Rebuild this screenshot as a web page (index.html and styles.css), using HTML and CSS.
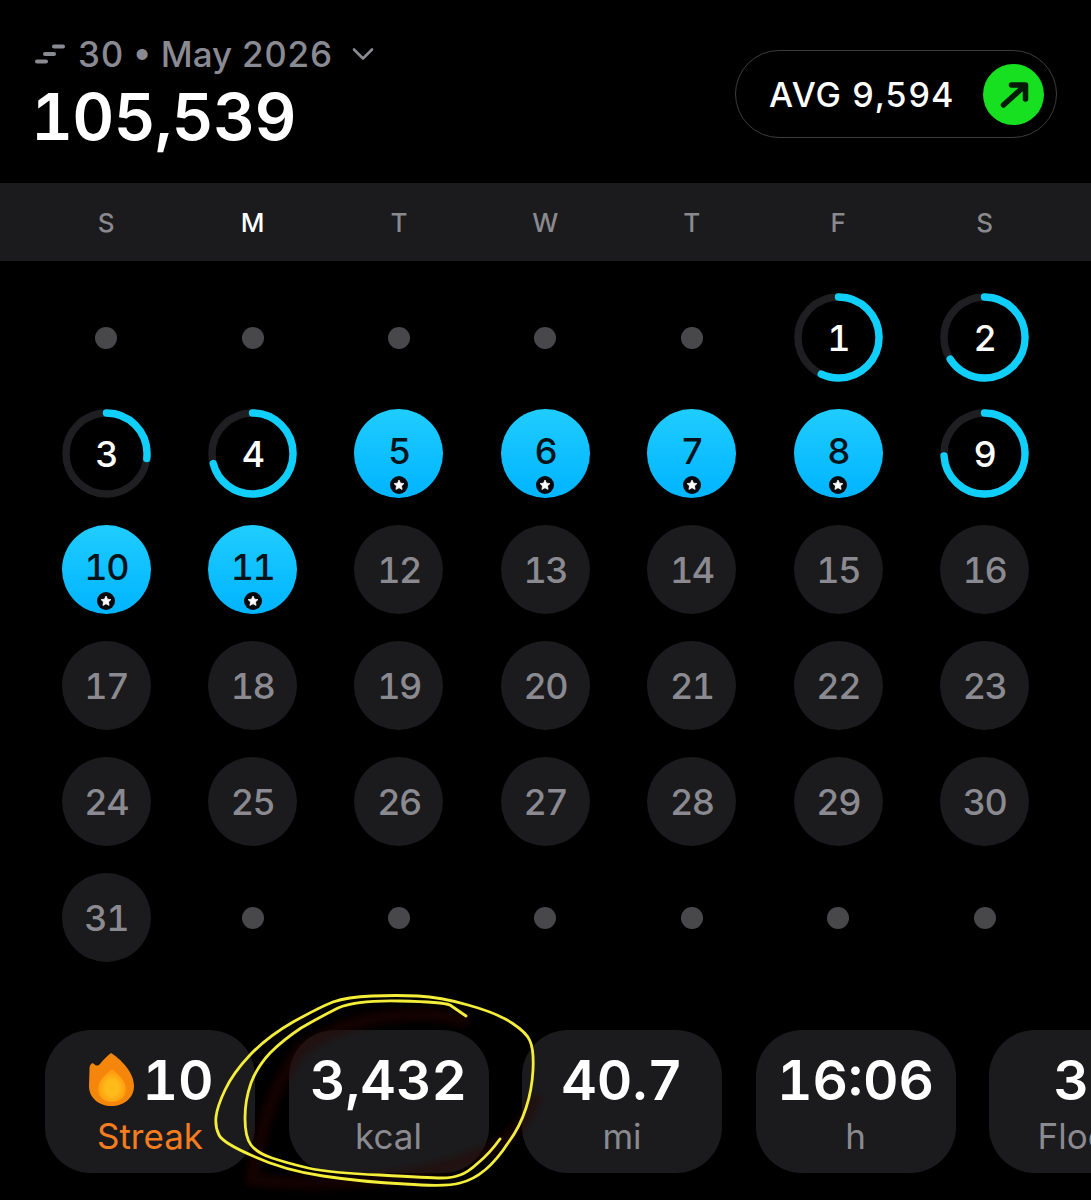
FILE: index.html
```html
<!DOCTYPE html>
<html>
<head>
    <title>Steps Calendar</title>
    <meta name="viewport" content="width=device-width, initial-scale=1">
    <link rel="stylesheet" href="styles.css">
</head>
<body>
    <svg class="defs" width="0" height="0">
        <symbol id="star" viewBox="0 0 24 24">
            <path d="M12 2l3 6.300 6.900.9-5 4.800 1.300 6.900-6.200-3.400-6.200 3.400 1.300-6.900-5-4.800 6.900-.9z" fill="#fff" stroke="#fff" stroke-width="1.500" stroke-linejoin="round"/>
        </symbol>
        <radialGradient id="flame-core" cx="0.5" cy="0.58" r="0.5">
            <stop offset="0.45" stop-color="#ffbb1a"/>
            <stop offset="1" stop-color="#ff9a0e"/>
        </radialGradient>
    </svg>

    <div class="page">
        <header class="top">
            <div>
                <div class="period">
                    <svg class="period-icon" width="32" height="22" viewBox="0 0 32 22">
                        <path d="M3 18.500h9M11 11h9M20 3.500h9" stroke="#8a8a92" stroke-width="4" stroke-linecap="round" fill="none"/>
                    </svg>
                    <span>30 • May 2026</span>
                    <svg class="chevron" width="24" height="14" viewBox="0 0 24 14">
                        <path d="M3 2.500l9 9 9-9" stroke="#8a8a92" stroke-width="2.600" stroke-linecap="round" stroke-linejoin="round" fill="none"/>
                    </svg>
                </div>
                <div class="total">105,539</div>
            </div>
            <div class="avg">
                <span>AVG 9,594</span>
                <div class="avg-arrow">
                    <svg width="36" height="36" viewBox="0 0 36 36">
                        <path d="M7.500 29L29 9.500M15.500 9H29.500V23" stroke="#061a08" stroke-width="5.500" stroke-linecap="round" stroke-linejoin="round" fill="none"/>
                    </svg>
                </div>
            </div>
        </header>

        <div class="weekdays">
            <span>S</span>
            <span class="today">M</span>
            <span>T</span>
            <span>W</span>
            <span>T</span>
            <span>F</span>
            <span>S</span>
        </div>

        <div class="month">
            <div class="cell"><i class="dot"></i></div>
            <div class="cell"><i class="dot"></i></div>
            <div class="cell"><i class="dot"></i></div>
            <div class="cell"><i class="dot"></i></div>
            <div class="cell"><i class="dot"></i></div>
            <div class="cell"><div class="day ring"><svg viewBox="0 0 90 90"><circle class="track" cx="45" cy="45" r="41"/><circle class="progress" cx="45" cy="45" r="41" pathLength="100" stroke-dasharray="57 100"/></svg>1</div></div>
            <div class="cell"><div class="day ring"><svg viewBox="0 0 90 90"><circle class="track" cx="45" cy="45" r="41"/><circle class="progress" cx="45" cy="45" r="41" pathLength="100" stroke-dasharray="66 100"/></svg>2</div></div>

            <div class="cell"><div class="day ring"><svg viewBox="0 0 90 90"><circle class="track" cx="45" cy="45" r="41"/><circle class="progress" cx="45" cy="45" r="41" pathLength="100" stroke-dasharray="27 100"/></svg>3</div></div>
            <div class="cell"><div class="day ring"><svg viewBox="0 0 90 90"><circle class="track" cx="45" cy="45" r="41"/><circle class="progress" cx="45" cy="45" r="41" pathLength="100" stroke-dasharray="71 100"/></svg>4</div></div>
            <div class="cell"><div class="day done">5<svg class="badge"><use href="#star"/></svg></div></div>
            <div class="cell"><div class="day done">6<svg class="badge"><use href="#star"/></svg></div></div>
            <div class="cell"><div class="day done">7<svg class="badge"><use href="#star"/></svg></div></div>
            <div class="cell"><div class="day done">8<svg class="badge"><use href="#star"/></svg></div></div>
            <div class="cell"><div class="day ring"><svg viewBox="0 0 90 90"><circle class="track" cx="45" cy="45" r="41"/><circle class="progress" cx="45" cy="45" r="41" pathLength="100" stroke-dasharray="74 100"/></svg>9</div></div>

            <div class="cell"><div class="day done">10<svg class="badge"><use href="#star"/></svg></div></div>
            <div class="cell"><div class="day done">11<svg class="badge"><use href="#star"/></svg></div></div>
            <div class="cell"><div class="day">12</div></div>
            <div class="cell"><div class="day">13</div></div>
            <div class="cell"><div class="day">14</div></div>
            <div class="cell"><div class="day">15</div></div>
            <div class="cell"><div class="day">16</div></div>

            <div class="cell"><div class="day">17</div></div>
            <div class="cell"><div class="day">18</div></div>
            <div class="cell"><div class="day">19</div></div>
            <div class="cell"><div class="day">20</div></div>
            <div class="cell"><div class="day">21</div></div>
            <div class="cell"><div class="day">22</div></div>
            <div class="cell"><div class="day">23</div></div>

            <div class="cell"><div class="day">24</div></div>
            <div class="cell"><div class="day">25</div></div>
            <div class="cell"><div class="day">26</div></div>
            <div class="cell"><div class="day">27</div></div>
            <div class="cell"><div class="day">28</div></div>
            <div class="cell"><div class="day">29</div></div>
            <div class="cell"><div class="day">30</div></div>

            <div class="cell"><div class="day">31</div></div>
            <div class="cell"><i class="dot"></i></div>
            <div class="cell"><i class="dot"></i></div>
            <div class="cell"><i class="dot"></i></div>
            <div class="cell"><i class="dot"></i></div>
            <div class="cell"><i class="dot"></i></div>
            <div class="cell"><i class="dot"></i></div>
        </div>

        <div class="stats">
            <div class="stat streak">
                <div class="value">
                    <svg class="flame" width="46" height="54" viewBox="0 0 46 54">
                        <path d="M22 0C30 5 45 18 45 33C45 45 35 53 22.500 53C10 53 0 45 0 33L.5 16C.5 12 3 9 5 11C7 13 9 13 11 11C14 7 18 3 22 0z" fill="#f5860c"/>
                        <path d="M23 16C30 22 37 28 37 36C37 44 31 49 23 49C15 49 9 44 9 36C9 28 16 22 23 16z" fill="url(#flame-core)"/>
                    </svg>
                    <span>10</span>
                </div>
                <div class="label">Streak</div>
            </div>
            <div class="stat">
                <div class="value">3,432</div>
                <div class="label">kcal</div>
            </div>
            <div class="stat">
                <div class="value">40.7</div>
                <div class="label">mi</div>
            </div>
            <div class="stat">
                <div class="value">16:06</div>
                <div class="label">h</div>
            </div>
            <div class="stat">
                <div class="value">36</div>
                <div class="label">Floors</div>
            </div>
        </div>

        <!-- marker scribble drawn on top of the screenshot -->
        <svg class="scribble" width="1091" height="1200" viewBox="0 0 1091 1200">
            <path class="smudge" d="M470 1022C430 1008 350 1012 300 1050C275 1085 262 1120 252 1180C340 1188 430 1180 490 1150C515 1135 530 1115 535 1095"/>
            <path class="ink" d="M333 1002Q347 997 372 996Q397 995 418 996Q440 997 468 1005Q497 1013 512 1023Q527 1033 530 1041Q534 1050 533 1070Q532 1090 526 1108Q520 1127 508 1143Q497 1160 485 1170Q473 1180 460 1183Q447 1187 405 1184Q363 1182 323 1176Q283 1170 253 1156Q223 1143 219 1135Q215 1127 216 1117Q217 1107 225 1090Q233 1073 250 1055Q267 1037 293 1022Q320 1007 333 1002"/>
            <path class="ink" d="M466 1016L450 1005Q443 1002 400 1001Q357 1000 338 1008Q320 1017 301 1028Q283 1040 270 1053Q257 1067 251 1083Q245 1100 245 1118Q245 1137 251 1145Q257 1153 272 1158Q287 1163 308 1168Q330 1173 380 1175Q430 1178 441 1178Q453 1178 460 1175Q467 1173 478 1163Q490 1153 500 1139"/>
        </svg>
    </div>
</body>
</html>
```
FILE: styles.css
```css
body {
    margin: 0;
    background-color: #000;
    font-family: Inter, "Noto Sans", sans-serif;
    font-variant-numeric: tabular-nums;
    color: #fff;
}
.defs {
    display: block;
    height: 0;
}
.page {
    position: relative;
    width: 1091px;
    height: 1200px;
    overflow: hidden;
}
.top {
    display: flex;
    justify-content: space-between;
    align-items: flex-start;
    height: 183px;
    padding: 35px 34px 0 34px;
    box-sizing: border-box;
}
.period {
    display: flex;
    align-items: center;
    height: 38px;
    font-size: 35px;
    font-weight: 500;
    color: #8a8a92;
}
.period-icon {
    margin-right: 12px;
}
.chevron {
    margin-left: 19px;
}
.total {
    margin-top: 5px;
    margin-left: -3px;
    font-size: 65px;
    font-weight: 600;
    line-height: 78px;
    letter-spacing: -0.7px;
}
.avg {
    display: flex;
    align-items: center;
    justify-content: space-between;
    width: 322px;
    height: 88px;
    margin-top: 15px;
    padding: 0 12px 0 33px;
    box-sizing: border-box;
    border: 1.5px solid #3c3c3e;
    border-radius: 44px;
    font-size: 34px;
    font-weight: 500;
    letter-spacing: 1px;
}
.avg-arrow {
    display: flex;
    align-items: center;
    justify-content: center;
    width: 61px;
    height: 61px;
    border-radius: 50%;
    background-color: #17e021;
}
.weekdays {
    display: grid;
    grid-template-columns: repeat(7, 146.4px);
    height: 78px;
    padding: 0 33px;
    align-items: center;
    background-color: #1b1b1d;
    font-size: 26px;
    font-weight: 500;
    color: #8a8a8e;
    text-align: center;
}
.today {
    color: #fff;
}
.month {
    display: grid;
    grid-template-columns: repeat(7, 146.4px);
    grid-auto-rows: 116px;
    padding: 18.5px 33px 0 33px;
}
.cell {
    display: flex;
    align-items: center;
    justify-content: center;
}
.dot {
    width: 22px;
    height: 22px;
    border-radius: 50%;
    background-color: #48484a;
}
.day {
    position: relative;
    display: flex;
    align-items: center;
    justify-content: center;
    width: 89px;
    height: 89px;
    border-radius: 50%;
    background-color: #1b1b1d;
    font-size: 36px;
    font-weight: 500;
    letter-spacing: -1.5px;
    color: #8a8a90;
}
.ring {
    background: none;
    color: #fff;
}
.ring svg {
    position: absolute;
    left: 0;
    top: 0;
    width: 89px;
    height: 89px;
    transform: rotate(-90deg);
}
.track, .progress {
    fill: none;
    stroke-width: 7.5;
}
.track {
    stroke: #1f1f21;
}
.progress {
    stroke: #10cffb;
    stroke-linecap: round;
}
.done {
    padding-bottom: 5px;
    box-sizing: border-box;
    background: linear-gradient(#20cdff, #00b4ff);
    color: #04121a;
}
.badge {
    position: absolute;
    left: 35.5px;
    bottom: 4px;
    width: 12px;
    height: 12px;
    padding: 3px;
    border-radius: 50%;
    background-color: #04090d;
}
.stats {
    display: flex;
    gap: 33.5px;
    margin-top: 54px;
    padding-left: 45px;
}
.stat {
    flex: 0 0 200px;
    height: 143px;
    padding-top: 19px;
    box-sizing: border-box;
    border-radius: 46px;
    background-color: #1b1b1d;
    text-align: center;
}
.streak {
    flex-basis: 210px;
}
.value {
    display: flex;
    align-items: center;
    justify-content: center;
    height: 62px;
    font-size: 55px;
    font-weight: 600;
}
.streak .value {
    padding-left: 3px;
}
.flame {
    margin-right: 7px;
}
.label {
    margin-top: 4px;
    font-size: 35px;
    color: #8a8a90;
    white-space: nowrap;
}
.streak .label {
    color: #f57c1f;
}
.scribble {
    position: absolute;
    left: 0;
    top: 0;
    pointer-events: none;
}
.smudge {
    fill: none;
    stroke: #2a0603;
    stroke-width: 14;
    opacity: 0.45;
    filter: blur(3px);
}
.ink {
    fill: none;
    stroke: #f4ee3a;
    stroke-width: 2.8;
    stroke-linecap: round;
    stroke-linejoin: round;
}
```
